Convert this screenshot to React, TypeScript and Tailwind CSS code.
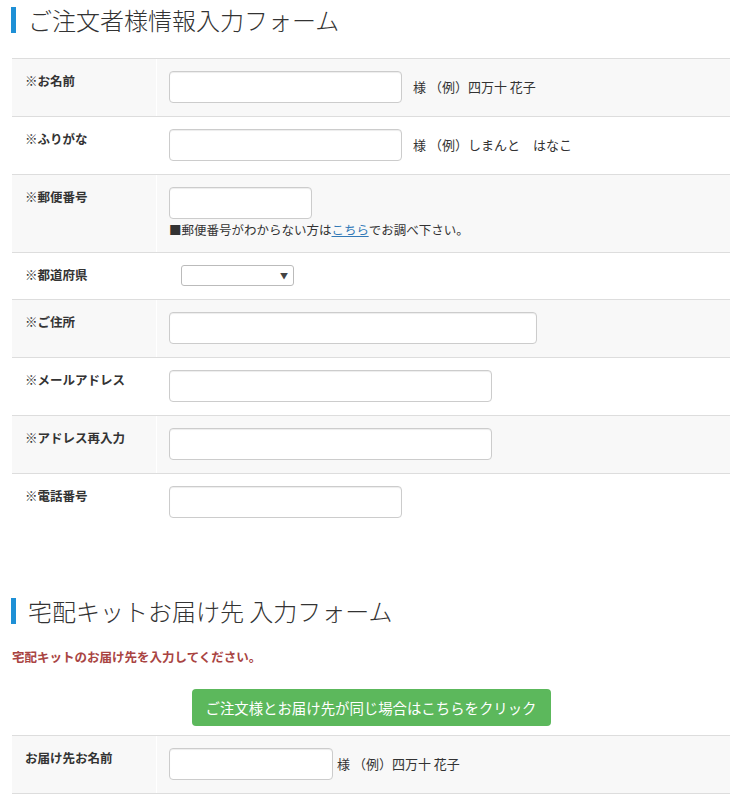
import React from "react";

const font = { fontFamily: '"Noto Sans CJK JP", "Noto Sans", sans-serif' };

function Heading({ children }: { children: React.ReactNode }) {
  return (
    <div className="flex items-center h-[26px] border-l-[5px] border-[#1e90d6] pl-[12px] ml-[-1px]">
      <h2 className="text-[24px] leading-[26px] font-light text-[#333]">{children}</h2>
    </div>
  );
}

function Row({
  label,
  gray,
  children,
}: {
  label: string;
  gray?: boolean;
  children: React.ReactNode;
}) {
  return (
    <div className={`flex border-t border-[#dddddd] ${gray ? "bg-[#f8f8f8]" : "bg-white"}`}>
      <div className="w-[145px] shrink-0 border-r border-white pl-[13px] pt-[13px] text-[12.5px] leading-[18px] font-bold text-[#333]">
        {label}
      </div>
      <div className="flex-1 pl-[12px] pr-[12px] pt-[12px] pb-[13px]">{children}</div>
    </div>
  );
}

function Input({ w }: { w: string }) {
  return (
    <input
      type="text"
      className={`${w} h-[32px] rounded-[4px] border border-[#cccccc] bg-white shadow-[inset_0_1px_1px_rgba(0,0,0,0.075)] outline-none`}
    />
  );
}

function Example({ text, gap = "ml-[11px]" }: { text: string; gap?: string }) {
  return <span className={`${gap} text-[13px] text-[#333] whitespace-pre`}>{text}</span>;
}

export default function App() {
  return (
    <div className="w-[735px] bg-white pl-[12px] pr-[5px] pb-[10px]" style={font}>
      <div className="pt-[7px]">
        <Heading>ご注文者様情報入力フォーム</Heading>
      </div>

      <div className="mt-[25px]">
        <Row label="※お名前" gray>
          <div className="flex items-center">
            <Input w="w-[233px]" />
            <Example text="様 （例）四万十 花子" />
          </div>
        </Row>
        <Row label="※ふりがな">
          <div className="flex items-center">
            <Input w="w-[233px]" />
            <Example text="様 （例）しまんと　はなこ" />
          </div>
        </Row>
        <Row label="※郵便番号" gray>
          <Input w="w-[143px]" />
          <div className="mt-[2px] text-[12.5px] leading-[18px] text-[#333]">
            ■郵便番号がわからない方は
            <a href="#" className="text-[#337ab7] underline">
              こちら
            </a>
            でお調べ下さい。
          </div>
        </Row>
        <Row label="※都道府県">
          <div className="ml-[12px] relative w-[113px] h-[21px] rounded-[3px] border border-[#bbbbbb] bg-white">
            <span className="absolute right-[5px] top-[3px] text-[8px] leading-[13px] text-[#444]">▼</span>
          </div>
        </Row>
        <Row label="※ご住所" gray>
          <Input w="w-[368px]" />
        </Row>
        <Row label="※メールアドレス">
          <Input w="w-[323px]" />
        </Row>
        <Row label="※アドレス再入力" gray>
          <Input w="w-[323px]" />
        </Row>
        <Row label="※電話番号">
          <Input w="w-[233px]" />
        </Row>
      </div>

      <div className="mt-[67px]">
        <Heading>宅配キットお届け先 入力フォーム</Heading>
      </div>

      <p className="mt-[24px] text-[12.5px] leading-[18px] font-bold text-[#a94442]">
        宅配キットのお届け先を入力してください。
      </p>

      <div className="mt-[23px] flex justify-center">
        <button className="w-[359px] h-[37px] rounded-[4px] bg-[#5cb85c] text-white text-[14.4px] leading-[20px]">
          ご注文様とお届け先が同じ場合はこちらをクリック
        </button>
      </div>

      <div className="mt-[9px] border-b border-[#dddddd]">
        <Row label="お届け先お名前" gray>
          <div className="flex items-center">
            <Input w="w-[164px]" />
            <Example text="様 （例）四万十 花子" gap="ml-[4px]" />
          </div>
        </Row>
      </div>
    </div>
  );
}
